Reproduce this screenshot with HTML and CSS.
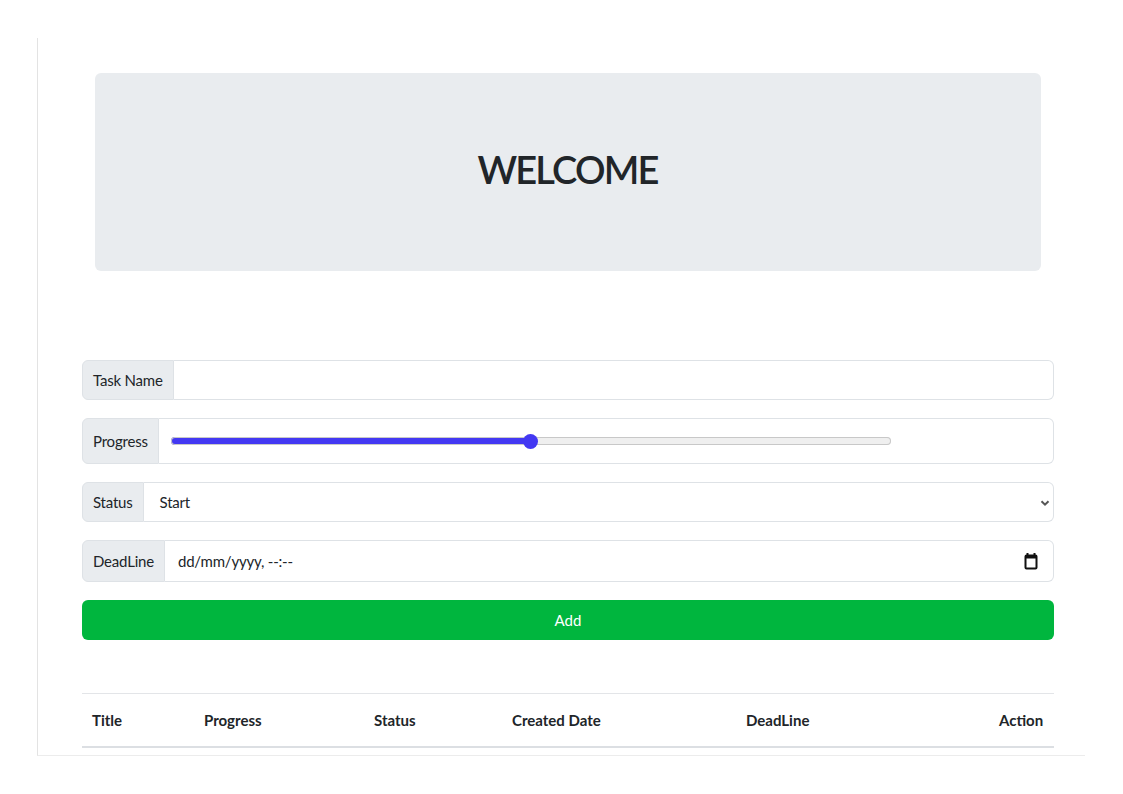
FILE: index.html
```html
<!DOCTYPE html>
<html lang="en">
<head>
<meta charset="utf-8">
<title>Tasks</title>
<link rel="stylesheet" href="styles.css">
</head>
<body>
<div class="frame">
  <div class="container">
    <div class="jumbotron">
      <h1 class="welcome">WELCOME</h1>
    </div>

    <form class="task-form">
      <div class="input-group h40">
        <span class="addon">Task Name</span>
        <input class="control" type="text">
      </div>
      <div class="input-group h46">
        <span class="addon">Progress</span>
        <div class="control range-wrap">
          <input class="range" type="range" min="0" max="100" value="50">
        </div>
      </div>
      <div class="input-group h40">
        <span class="addon">Status</span>
        <div class="control select-box">
          <span class="select-text">Start</span>
          <svg class="chevron" width="10" height="8" viewBox="0 0 10 8"><path d="M1.5 2.2 L5 5.7 L8.5 2.2" fill="none" stroke="#555" stroke-width="2"/></svg>
        </div>
      </div>
      <div class="input-group h42">
        <span class="addon">DeadLine</span>
        <div class="control date-box">
          <span class="date-text">dd/mm/yyyy, --:--</span>
          <svg class="cal" width="14" height="18" viewBox="0 0 14 18"><path d="M3.5 1 V4 M10.5 1 V4" stroke="#111" stroke-width="2"/><rect x="1.5" y="3.5" width="11" height="13" rx="1" fill="none" stroke="#111" stroke-width="2"/><rect x="1.5" y="3.5" width="11" height="3" fill="#111"/></svg>
        </div>
      </div>
      <button type="button" class="add-btn">Add</button>
    </form>

    <table class="tasks">
      <thead>
        <tr>
          <th class="c1">Title</th>
          <th class="c2">Progress</th>
          <th class="c3">Status</th>
          <th class="c4">Created Date</th>
          <th class="c5">DeadLine</th>
          <th class="c6">Action</th>
        </tr>
      </thead>
    </table>
  </div>
</div>
</body>
</html>
```
FILE: styles.css
```css
* { box-sizing: border-box; }
html, body { margin: 0; padding: 0; background: #fff; }
body {
  font-family: Lato, "Noto Sans", sans-serif;
  font-size: 15px;
  letter-spacing: -0.2px;
  color: #212529;
}
.frame {
  margin: 38px 0 0 37px;
  width: 1048px;
  height: 718px;
  border-left: 1px solid #e3e3e3;
  border-bottom: 1px solid #ececec;
}
.container {
  width: 972px;
  margin-left: 44px;
  padding-top: 35px;
}
.jumbotron {
  margin: 0 13px;
  height: 198px;
  background: #e9ecef;
  border-radius: 6px;
  display: flex;
  align-items: center;
  justify-content: center;
}
.welcome {
  margin: 0;
  font-size: 38px;
  font-weight: 600;
  color: #212529;
  letter-spacing: -1.8px;
  padding-bottom: 6px;
  padding-right: 1px;
}
.task-form {
  margin-top: 89px;
  display: flex;
  flex-direction: column;
  gap: 18px;
}
.input-group { display: flex; }
.h40 { height: 40px; }
.h42 { height: 42px; }
.h46 { height: 46px; }
.addon {
  display: flex;
  align-items: center;
  padding: 0 10px;
  background: #e9ecef;
  border: 1px solid #dee2e6;
  border-radius: 6px 0 0 6px;
  color: #212529;
  white-space: nowrap;
}
.control {
  flex: 1;
  border: 1px solid #dee2e6;
  border-left: 0;
  border-radius: 0 6px 6px 0;
  background: #fff;
  font: inherit;
  outline: none;
  margin: 0;
}
.range-wrap {
  display: flex;
  align-items: center;
  padding-left: 12px;
}
.range {
  -webkit-appearance: none;
  appearance: none;
  width: 720px;
  height: 16px;
  margin: 0;
  background: transparent;
}
.range::-webkit-slider-runnable-track {
  height: 8px;
  border-radius: 4px;
  background: linear-gradient(to right, #4338f2 0 50%, #efefef 50% 100%);
  box-shadow: inset 0 0 0 1px #c8c8c8;
}
.range::-webkit-slider-thumb {
  -webkit-appearance: none;
  width: 15px;
  height: 15px;
  border-radius: 50%;
  background: #4338f2;
  margin-top: -3.5px;
  border: 0;
}
.select-box, .date-box {
  display: flex;
  align-items: center;
  justify-content: space-between;
}
.select-box { padding: 0 3px 0 16px; }
.date-box { padding: 0 15px 0 13px; }
.select-text, .date-text { color: #212529; }
.chevron { margin-top: 1px; }
.add-btn {
  height: 40px;
  border: 0;
  border-radius: 6px;
  background: #00b63e;
  color: #fff;
  font: inherit;
}
.tasks {
  margin-top: 53px;
  width: 972px;
  border-collapse: collapse;
  table-layout: fixed;
}
.tasks th {
  text-align: left;
  font-weight: 700;
  font-size: 15px;
  letter-spacing: 0;
  padding: 14px 8px;
  height: 53px;
  border-top: 1px solid #e3e5e8;
  border-bottom: 2px solid #dcdfe3;
  color: #212529;
}
.tasks th.c1 { padding-left: 10px; }
.c1 { width: 114px; }
.c2 { width: 170px; }
.c3 { width: 138px; }
.c4 { width: 234px; }
.c5 { width: 253px; }
.c6 { width: 63px; }
```
